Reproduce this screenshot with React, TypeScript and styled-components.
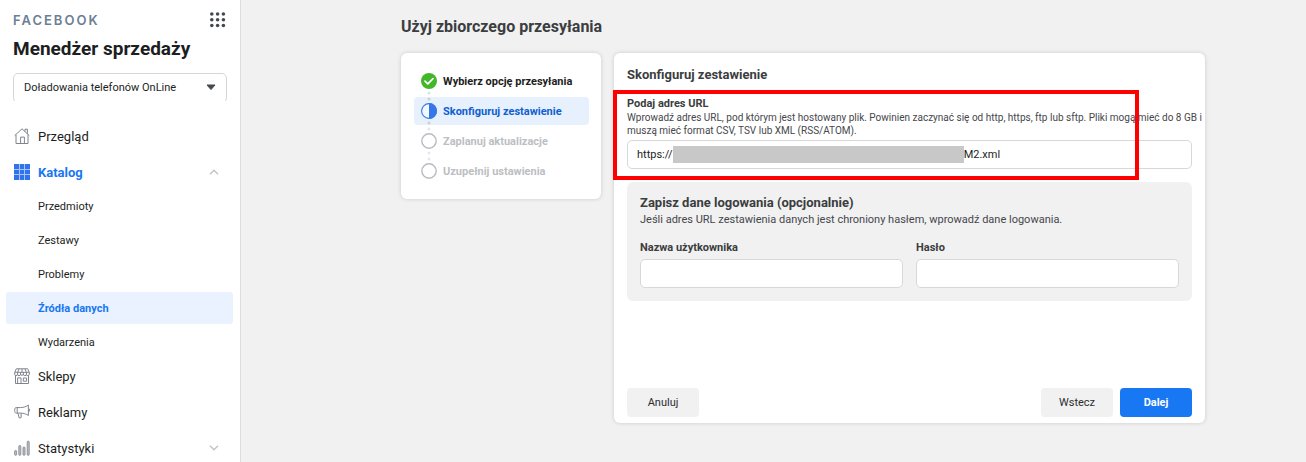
import React from "react";
import styled, { createGlobalStyle, css } from "styled-components";

const GlobalStyle = createGlobalStyle`
  *, *::before, *::after { box-sizing: border-box; }
  body {
    margin: 0;
    background: #f1f1f1;
    color: #1c1e21;
    font-family: Roboto, "Liberation Sans", sans-serif;
    font-size: 11px;
  }
  button, input, select { font: inherit; color: inherit; }
  h1, h2, h3, p, ul, ol { margin: 0; padding: 0; }
  ul, ol { list-style: none; }
`;

const Page = styled.div`
  display: flex;
  min-height: 100vh;
`;

const Sidebar = styled.aside`
  flex: 0 0 241px;
  border-right: 1px solid #dadde1;
  background: #fff;
  height: 100vh;
  overflow: hidden;
`;

const SidebarHeader = styled.header`
  padding: 12px 13px 0;
`;

const BrandRow = styled.div`
  display: flex;
  align-items: center;
  justify-content: space-between;
  height: 16px;
`;

const Brand = styled.span`
  color: #6b8095;
  font-family: Inter, sans-serif;
  font-size: 13px;
  font-weight: 600;
  letter-spacing: 2px;
`;

const IconButton = styled.button`
  display: flex;
  padding: 0;
  border: 0;
  background: none;
  color: #444950;
`;

const SidebarTitle = styled.h1`
  margin-top: 9px;
  font-size: 19px;
  line-height: 24px;
  font-weight: 700;
`;

const AccountClip = styled.div`
  position: relative;
  height: 28px;
  margin-top: 12px;
  overflow: hidden;
`;

const AccountSelect = styled.select`
  width: 100%;
  height: 30px;
  padding: 0 30px 2px 10px;
  border: 1px solid #d4d6da;
  border-radius: 5px;
  background: #fff;
  appearance: none;
`;

const SelectArrow = styled.svg`
  position: absolute;
  top: 11px;
  right: 11px;
  pointer-events: none;
`;

const Nav = styled.nav`
  padding: 17px 7px 0 6px;
`;

const NavLink = styled.a<{ $active?: boolean }>`
  display: grid;
  grid-template-columns: 16px 1fr 10px;
  align-items: center;
  column-gap: 8px;
  height: 36px;
  padding: 0 14px 0 8px;
  color: ${(p) => (p.$active ? "#1877f2" : "#1c1e21")};
  font-size: 13px;
  font-weight: ${(p) => (p.$active ? 700 : 400)};
  text-decoration: none;
`;

const SubList = styled.ul`
  display: grid;
  gap: 2px;
`;

const SubLink = styled.a<{ $active?: boolean }>`
  display: flex;
  align-items: center;
  height: 32px;
  padding-left: 32px;
  border-radius: 3px;
  color: #1c1e21;
  text-decoration: none;
  ${(p) =>
    p.$active &&
    css`
      background: #ebf2ff;
      color: #1877f2;
      font-weight: 700;
    `}
`;

const Main = styled.main`
  flex: 1;
  min-width: 0;
  padding: 16px 101px 39px 160px;
`;

const PageTitle = styled.h2`
  color: #3b3d40;
  font-size: 16px;
  line-height: 22px;
  font-weight: 700;
`;

const Columns = styled.div`
  display: grid;
  grid-template-columns: 200px minmax(0, 1fr);
  align-items: start;
  gap: 13px;
  margin-top: 15px;
`;

const Card = styled.section`
  border-radius: 6px;
  background: #fff;
  box-shadow: 0 0 4px rgba(0, 0, 0, 0.16);
`;

const StepsCard = styled(Card)`
  padding: 14px 12px 14px 13px;
`;

const Steps = styled.ol`
  display: grid;
  gap: 2px;
`;

type StepState = "done" | "current" | "todo";

const stepColor: Record<StepState, string> = {
  done: "#1c1e21",
  current: "#0f5fd0",
  todo: "#bcbec2",
};

const Step = styled.li<{ $state: StepState }>`
  position: relative;
  display: flex;
  align-items: center;
  gap: 6px;
  height: 28px;
  padding-left: 7px;
  border-radius: 4px;
  background: ${(p) => (p.$state === "current" ? "#e7f0fd" : "transparent")};
  color: ${(p) => stepColor[p.$state]};
  font-weight: 700;
`;

const StepDots = styled.svg`
  position: absolute;
  left: 13px;
  top: 24px;
  z-index: 1;
`;

const FormCard = styled(Card)`
  display: flex;
  flex-direction: column;
  min-height: 370px;
  padding: 13px 13px 6px;
`;

const CardTitle = styled.h3`
  color: #3b3d40;
  font-size: 13px;
  line-height: 18px;
  font-weight: 700;
`;

const UrlSection = styled.div`
  position: relative;
  margin-top: 13px;
`;

const Highlight = styled.div`
  position: absolute;
  inset: -7px 53px -11px -14px;
  border: 4px solid #fe0000;
  pointer-events: none;
`;

const Label = styled.label`
  display: block;
  color: #3b3d40;
  line-height: 14px;
  font-weight: 700;
`;

const Hint = styled.p`
  color: #45474b;
  line-height: 15px;
`;

/* Runs into the card's right padding so the long sentence breaks later. */
const WideHint = styled(Hint)`
  margin-right: -13px;
  font-size: 10px;
  line-height: 13px;
`;

const UrlField = styled.div`
  display: flex;
  align-items: center;
  height: 29px;
  margin-top: 3px;
  padding: 0 9px;
  border: 1px solid #d8d8d8;
  border-radius: 5px;
  background: #fff;
`;

const Redacted = styled.span`
  flex: 0 1 291px;
  height: 17px;
  background: #c8c8c8;
`;

const BareInput = styled.input`
  flex: 1;
  min-width: 0;
  padding: 0;
  border: 0;
  outline: 0;
  background: transparent;
`;

const LoginPanel = styled.fieldset`
  margin: 13px 0 0;
  padding: 12px 13px 13px;
  border: 0;
  border-radius: 6px;
  background: #f1f1f1;
`;

const FieldRow = styled.div`
  display: grid;
  grid-template-columns: 1fr 1fr;
  gap: 13px;
  margin-top: 14px;
`;

const TextInput = styled.input`
  display: block;
  width: 100%;
  height: 29px;
  margin-top: 4px;
  padding: 0 9px;
  border: 1px solid #d8d8d8;
  border-radius: 5px;
  background: #fff;
`;

const Footer = styled.footer`
  display: flex;
  gap: 7px;
  margin-top: auto;
`;

const Button = styled.button<{ $primary?: boolean }>`
  width: 72px;
  height: 29px;
  padding: 0;
  border: 0;
  border-radius: 4px;
  background: ${(p) => (p.$primary ? "#1877f2" : "#f1f1f1")};
  color: ${(p) => (p.$primary ? "#fff" : "#2b2d30")};
  font-weight: ${(p) => (p.$primary ? 700 : 400)};

  &:first-child { margin-right: auto; }
`;

const line = { fill: "none", stroke: "#7f858e", strokeWidth: 1 };

const AppsIcon = () => (
  <svg width="18" height="16" viewBox="0 0 18 16" fill="currentColor" aria-hidden="true">
    {[2, 7.8, 13.5].map((y) => [2.8, 8.6, 14.4].map((x) => <circle key={`${x}-${y}`} cx={x} cy={y} r="1.8" />))}
  </svg>
);

const HomeIcon = () => (
  <svg width="16" height="16" viewBox="0 0 16 16" {...line} aria-hidden="true">
    <path d="M.7 7.6 8 .8l7.3 6.8M2 6.6v8.9h12V6.6M11 3.4V1.2h2.4v4.5M6.6 15.3V9.1h3.8v6.2" />
  </svg>
);

const GridIcon = () => (
  <svg width="16" height="16" viewBox="0 0 16 16" aria-hidden="true">
    <path d="M0 0h16v16H0z" fill="#2f74ee" />
    <path d="M5.5 0v16M10.5 0v16M0 5.5h16M0 10.5h16" stroke="#a9c5f8" strokeWidth="1" />
  </svg>
);

const StoreIcon = () => (
  <svg width="16" height="16" viewBox="0 0 16 16" {...line} aria-hidden="true">
    <path d="M2.3.8h11.4l1.6 3.7v1.7a1.3 1.3 0 0 1-2.9 0 1.5 1.5 0 0 1-3 0 1.5 1.5 0 0 1-2.9 0 1.5 1.5 0 0 1-3 0 1.3 1.3 0 0 1-2.8 0V4.5zM.7 4.3h14.6M5 .8 3.6 4.4v1.8M8 .8v3.6M11 .8l1.4 3.6v1.8M6.5 4.4v1.8M9.4 4.4v1.8M1.5 7.8v7.7h13V7.8M3.6 15.4v-5.5H7v5.5M9.3 10h3.3v3.2H9.3z" />
  </svg>
);

const MegaphoneIcon = () => (
  <svg width="16" height="16" viewBox="0 0 16 16" {...line} aria-hidden="true">
    <path d="M2.2 3.6h4.2c3.2 0 5.8-1 8-2.5v10.4c-2.2-1.5-4.8-2.4-8-2.4H2.2C1.2 9.1.7 8.3.7 6.3s.5-2.7 1.5-2.7zM3.2 3.6v5.5M3.9 9.2l1.2 4.6h2V9.2M14.4 5.2h1v2h-1" />
  </svg>
);

const StatsIcon = () => (
  <svg width="16" height="16" viewBox="0 0 16 16" fill="#b9bdc3" stroke="#7f858e" strokeWidth=".8" aria-hidden="true">
    <rect x=".6" y="10.5" width="2" height="4.8" rx=".8" />
    <rect x="4.8" y="5.5" width="2" height="9.8" rx=".8" />
    <rect x="9" y="7" width="2" height="8.3" rx=".8" />
    <rect x="13.2" y="1.2" width="2" height="14.1" rx=".8" />
  </svg>
);

const Chevron = ({ up }: { up?: boolean }) => (
  <svg width="10" height="6" viewBox="0 0 10 6" fill="none" stroke="#bfc3c9" strokeWidth="1.4" aria-hidden="true">
    <path d={up ? "M1 5.2 5 1.2l4 4" : "M1 .8l4 4 4-4"} />
  </svg>
);

const StepIcon = ({ state }: { state: StepState }) => (
  <svg width="16" height="16" viewBox="0 0 16 16" aria-hidden="true">
    {state === "done" && (
      <>
        <circle cx="8" cy="8" r="8" fill="#42b72a" />
        <path d="m4 8.2 2.8 2.7L12 5.6" fill="none" stroke="#fff" strokeWidth="1.7" strokeLinecap="round" strokeLinejoin="round" />
      </>
    )}
    {state === "current" && (
      <>
        <circle cx="8" cy="8" r="7.4" fill="#f3f8ff" stroke="#3578e5" strokeWidth="1.1" />
        <path d="M8 0a8 8 0 0 1 0 16z" fill="#3578e5" />
      </>
    )}
    {state === "todo" && <circle cx="8" cy="8" r="7.2" fill="#fff" stroke="#b8bbc2" strokeWidth="1.4" />}
  </svg>
);

const subItems = ["Przedmioty", "Zestawy", "Problemy", "Źródła danych", "Wydarzenia"];

const steps: { label: string; state: StepState; dots?: [string, string] }[] = [
  { label: "Wybierz opcję przesyłania", state: "done", dots: ["#dcdfe4", "#c9d0da"] },
  { label: "Skonfiguruj zestawienie", state: "current", dots: ["#c9d0da", "#e6e7ea"] },
  { label: "Zaplanuj aktualizacje", state: "todo", dots: ["#e6e7ea", "#e6e7ea"] },
  { label: "Uzupełnij ustawienia", state: "todo" },
];

export default function App() {
  return (
    <Page>
      <GlobalStyle />
      <Sidebar>
        <SidebarHeader>
          <BrandRow>
            <Brand>FACEBOOK</Brand>
            <IconButton type="button" aria-label="Menu">
              <AppsIcon />
            </IconButton>
          </BrandRow>
          <SidebarTitle>Menedżer sprzedaży</SidebarTitle>
          <AccountClip>
            <AccountSelect aria-label="Konto">
              <option>Doładowania telefonów OnLine</option>
            </AccountSelect>
            <SelectArrow width="10" height="7" viewBox="0 0 10 7" aria-hidden="true">
              <path d="M1 1h8L5 5.6z" fill="#444950" stroke="#444950" strokeWidth="1" strokeLinejoin="round" />
            </SelectArrow>
          </AccountClip>
        </SidebarHeader>
        <Nav>
          <NavLink href="#"><HomeIcon />Przegląd</NavLink>
          <NavLink href="#" $active><GridIcon />Katalog<Chevron up /></NavLink>
          <SubList>
            {subItems.map((item) => (
              <li key={item}>
                <SubLink href="#" $active={item === "Źródła danych"}>{item}</SubLink>
              </li>
            ))}
          </SubList>
          <NavLink href="#"><StoreIcon />Sklepy</NavLink>
          <NavLink href="#"><MegaphoneIcon />Reklamy</NavLink>
          <NavLink href="#"><StatsIcon />Statystyki<Chevron /></NavLink>
        </Nav>
      </Sidebar>
      <Main>
        <PageTitle>Użyj zbiorczego przesyłania</PageTitle>
        <Columns>
          <StepsCard>
            <Steps>
              {steps.map(({ label, state, dots }) => (
                <Step key={label} $state={state}>
                  <StepIcon state={state} />
                  {label}
                  {dots && (
                    <StepDots width="4" height="10" viewBox="0 0 4 10" aria-hidden="true">
                      <circle cx="2" cy="2" r="1.5" fill={dots[0]} />
                      <circle cx="2" cy="8" r="1.5" fill={dots[1]} />
                    </StepDots>
                  )}
                </Step>
              ))}
            </Steps>
          </StepsCard>
          <FormCard>
            <CardTitle>Skonfiguruj zestawienie</CardTitle>
            <UrlSection>
              <Label htmlFor="feed-url">Podaj adres URL</Label>
              <WideHint>
                Wprowadź adres URL, pod którym jest hostowany plik. Powinien zaczynać się od http, https, ftp lub sftp. Pliki mogą mieć do 8 GB i muszą mieć format CSV, TSV lub XML (RSS/ATOM).
              </WideHint>
              <UrlField>
                <span>https://</span>
                <Redacted />
                <BareInput id="feed-url" type="text" defaultValue="M2.xml" />
              </UrlField>
              <Highlight />
            </UrlSection>
            <LoginPanel>
              <CardTitle>Zapisz dane logowania (opcjonalnie)</CardTitle>
              <Hint>Jeśli adres URL zestawienia danych jest chroniony hasłem, wprowadź dane logowania.</Hint>
              <FieldRow>
                <div>
                  <Label htmlFor="user">Nazwa użytkownika</Label>
                  <TextInput id="user" type="text" />
                </div>
                <div>
                  <Label htmlFor="password">Hasło</Label>
                  <TextInput id="password" type="password" />
                </div>
              </FieldRow>
            </LoginPanel>
            <Footer>
              <Button type="button">Anuluj</Button>
              <Button type="button">Wstecz</Button>
              <Button type="button" $primary>Dalej</Button>
            </Footer>
          </FormCard>
        </Columns>
      </Main>
    </Page>
  );
}
